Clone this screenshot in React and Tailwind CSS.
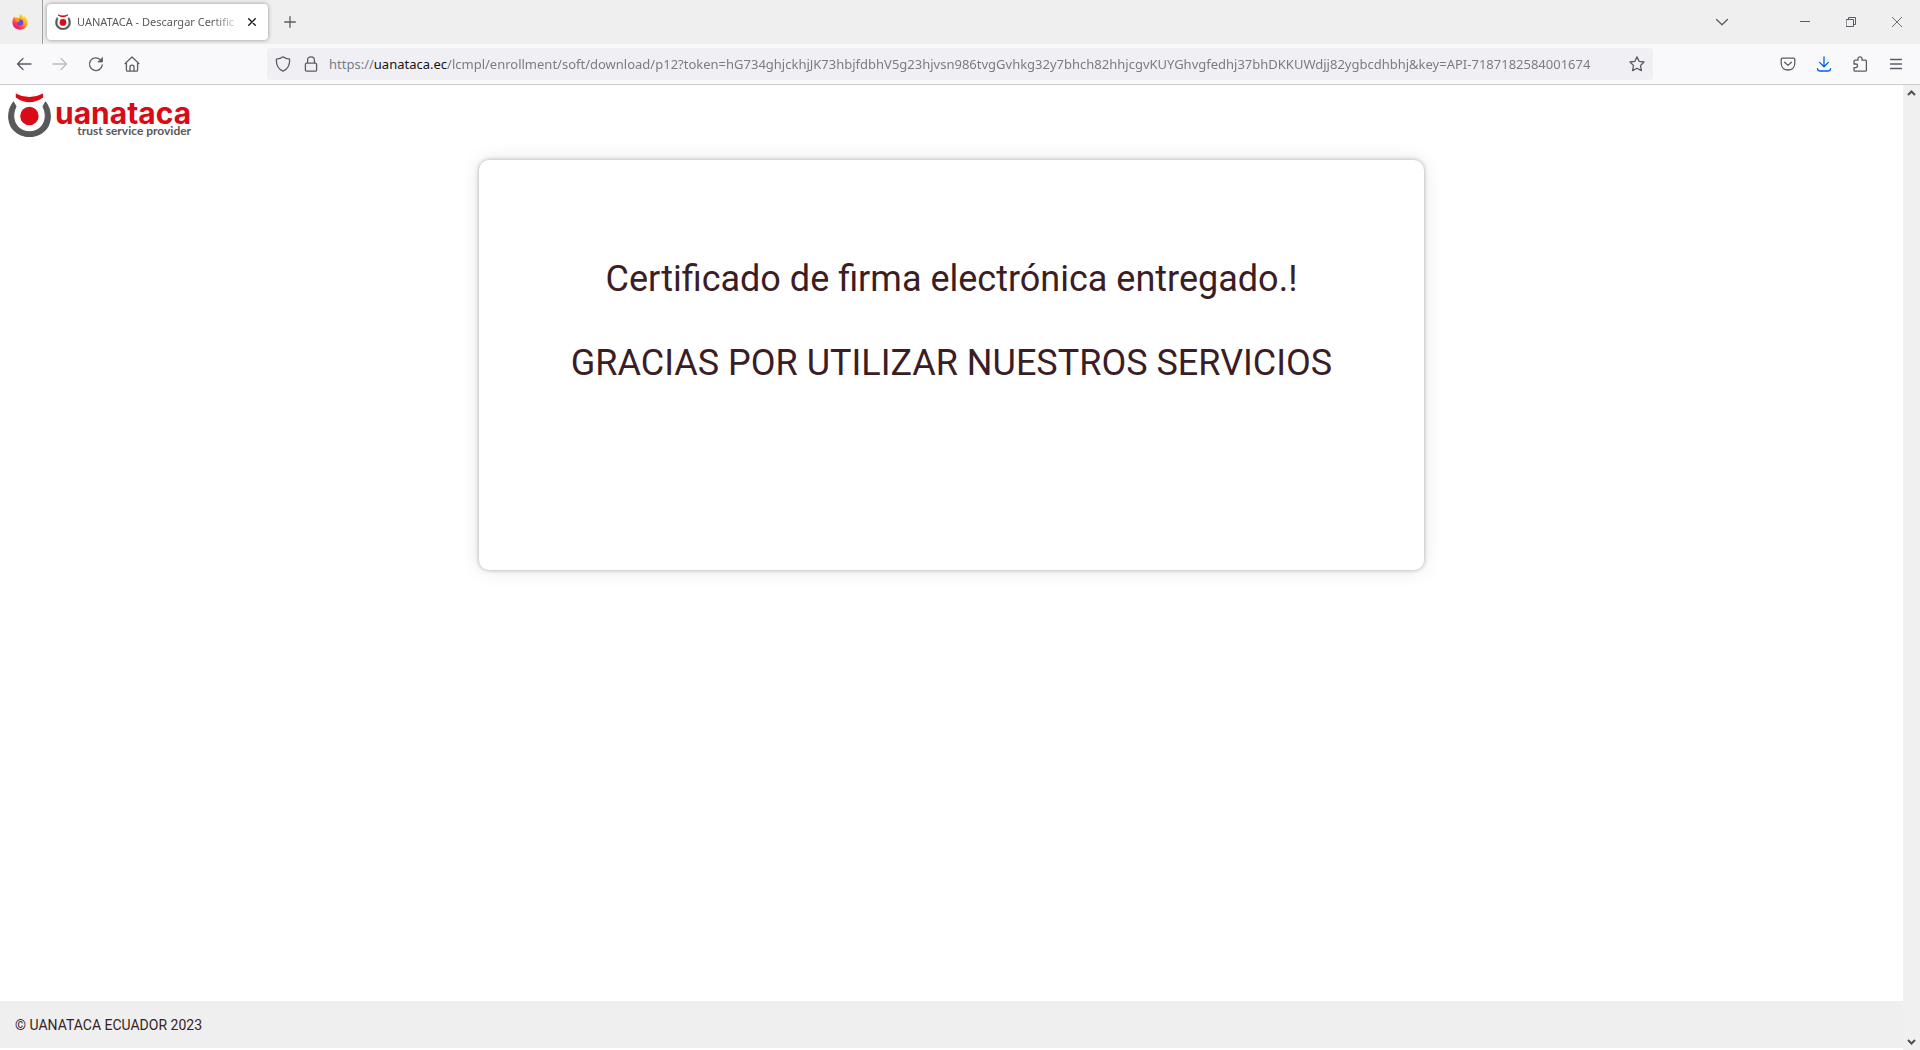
import React, { useState } from 'react';
import { clsx } from 'clsx';

const URL_PATH = '/lcmpl/enrollment/soft/download/p12?token=hG734ghjckhjJK73hbjfdbhV5g23hjvsn986tvgGvhkg32y7bhch82hhjcgvKUYGhvgfedhj37bhDKKUWdjj82ygbcdhbhj&key=API-7187182584001674';

const Icon = ({ children, size = 16, className }) => (
    <svg
        width={size}
        height={size}
        viewBox={`0 0 ${size} ${size}`}
        fill="none"
        stroke="currentColor"
        strokeWidth="1.3"
        strokeLinecap="round"
        strokeLinejoin="round"
        className={clsx('shrink-0', className)}
        aria-hidden="true"
    >
        {children}
    </svg>
);

const ToolButton = ({ label, children, className, disabled }) => (
    <button
        type="button"
        aria-label={label}
        disabled={disabled}
        className={clsx('flex h-8 w-9 shrink-0 items-center justify-center', className)}
    >
        {children}
    </button>
);

const LogoMark = ({ className }) => (
    <svg viewBox="1 0 41 42" className={clsx('shrink-0', className)} fill="none" aria-hidden="true">
        <path
            d="M6.2 8.6 C-0.6 17.5 0.4 30.5 7.6 36.4 C15.4 43.4 27.6 43.4 35.4 36.4 C42.6 30.5 43.6 17.5 36.8 8.6 L34.4 13 C38.2 20 36.8 28.6 32 33 C26.2 38.4 16.8 38.4 11 33 C6.2 28.6 4.8 20 8.6 13 Z"
            fill="#58595b"
            stroke="#58595b"
            strokeWidth="1"
            strokeLinejoin="round"
        />
        <path d="M8.4 0.4 Q21.3 7.4 34.4 0.4 L34.6 4.2 Q28 8.8 21.4 8.8 Q14.6 8.8 8.4 4.2 Z" fill="#d90b17" />
        <circle cx="21.4" cy="22" r="8.8" fill="#d90b17" />
    </svg>
);

const FirefoxIcon = () => (
    <svg width="16" height="16" viewBox="0 0 16 16" aria-hidden="true">
        <defs>
            <linearGradient id="fox" x1="0.8" y1="0.1" x2="0.2" y2="0.9">
                <stop offset="0" stopColor="#ffe226" />
                <stop offset="0.45" stopColor="#ff9a1f" />
                <stop offset="0.75" stopColor="#ff3b47" />
                <stop offset="1" stopColor="#e31587" />
            </linearGradient>
        </defs>
        <path
            d="M8.6 0.3 C10.5 1.4 11.2 2.5 11.4 3.6 L12.6 2.6 C14.6 4.2 15.8 6 15.7 8.6 C15.5 12.8 12.2 15.7 8 15.7 C3.7 15.7 0.4 12.5 0.4 8.3 C0.4 5.7 1.3 3.7 2.6 2.5 L3.2 3.9 C4.4 3.3 6 3.4 7.2 4 C7 2.5 7.5 1.2 8.6 0.3 Z"
            fill="url(#fox)"
        />
        <circle cx="8" cy="8.4" r="3.2" fill="#7543e3" />
        <path d="M3.4 5.2 C5 4.4 7 4.9 8.3 6.4 C6.8 6.6 6.3 7.4 6.8 8.2 C5.4 8.8 4 7.6 3.4 5.2 Z" fill="#ffa02b" />
    </svg>
);

const TabStrip = () => (
    <header className="flex h-11 shrink-0 items-center bg-[#efefef] text-[#5b5b66]">
        <div className="flex h-full w-[43px] items-center justify-center border-r border-[#a0a0a0] pr-0.5">
            <FirefoxIcon />
        </div>
        <div className="ml-1 flex h-9 w-[221px] items-center rounded bg-white px-2 shadow-[0_0_4px_rgba(0,0,0,0.4)]">
            <LogoMark className="h-4 w-4" />
            <span className="ml-1.5 flex-1 overflow-hidden whitespace-nowrap text-[11px] text-[#5a5a5a] [mask-image:linear-gradient(to_left,transparent,black_32px)]">
                UANATACA - Descargar Certific
            </span>
            <button type="button" aria-label="Cerrar" className="flex h-4 w-4 items-center justify-center text-[#15141a]">
                <Icon size={8}>
                    <path d="M0.7 0.7 L7.3 7.3 M7.3 0.7 L0.7 7.3" />
                </Icon>
            </button>
        </div>
        <ToolButton label="Nueva pestaña" className="ml-1">
            <Icon size={12}>
                <path d="M6 0.7 V11.3 M0.7 6 H11.3" />
            </Icon>
        </ToolButton>
        <div className="flex-1" />
        <ToolButton label="Listar pestañas" className="mr-[42px]">
            <Icon size={14}>
                <path d="M1.5 4.5 L7 9.8 L12.5 4.5" />
            </Icon>
        </ToolButton>
        <div className="flex">
            <button type="button" aria-label="Minimizar" className="flex h-11 w-[46px] items-center justify-center">
                <Icon size={10}>
                    <path d="M0 4.5 H10" strokeWidth="1" strokeLinecap="butt" />
                </Icon>
            </button>
            <button type="button" aria-label="Restaurar" className="flex h-11 w-[46px] items-center justify-center">
                <Icon size={10}>
                    <path d="M0.5 2.5 H7.5 V9.5 H0.5 Z M2.5 2.5 V0.5 H9.5 V7.5 H7.5" strokeWidth="1" />
                </Icon>
            </button>
            <button type="button" aria-label="Cerrar ventana" className="flex h-11 w-[46px] items-center justify-center">
                <Icon size={10}>
                    <path d="M0.3 0.3 L9.7 9.7 M9.7 0.3 L0.3 9.7" strokeWidth="0.9" />
                </Icon>
            </button>
        </div>
    </header>
);

const UrlBar = () => {
    const [path, setPath] = useState(URL_PATH);

    return (
        <div className="mx-[117px] flex h-8 min-w-0 flex-1 items-center rounded bg-[#f0f0f4] px-2 text-[13px] text-[#7b7b83]">
            <Icon className="text-[#5b5b66]">
                <path d="M8 0.8 C9.8 2.2 12 2.9 14.6 3.1 C15 8.6 12.8 13 8 15.2 C3.2 13 1 8.6 1.4 3.1 C4 2.9 6.2 2.2 8 0.8 Z" />
            </Icon>
            <Icon className="ml-3 text-[#5b5b66]">
                <path d="M3.6 7.2 H12.4 Q13.6 7.2 13.6 8.4 V14 Q13.6 15.2 12.4 15.2 H3.6 Q2.4 15.2 2.4 14 V8.4 Q2.4 7.2 3.6 7.2 Z M4.6 7.2 V4.2 Q4.6 0.8 8 0.8 Q11.4 0.8 11.4 4.2 V7.2" />
            </Icon>
            <label htmlFor="url" className="ml-2.5 whitespace-nowrap pt-0.5">
                https://<span className="text-[#15141a]">uanataca.ec</span>
            </label>
            <input
                id="url"
                type="text"
                value={path}
                onChange={(e) => setPath(e.target.value)}
                className="min-w-0 flex-1 bg-transparent pt-0.5 outline-none [mask-image:linear-gradient(to_left,transparent,black_32px)]"
            />
            <button type="button" aria-label="Añadir a marcadores" className="ml-2 text-[#5b5b66]">
                <Icon>
                    <path d="M8 0.9 L10.1 5.3 L15 6 L11.5 9.5 L12.4 14.6 L8 12.2 L3.6 14.6 L4.5 9.5 L1 6 L5.9 5.3 Z" />
                </Icon>
            </button>
        </div>
    );
};

const NavBar = () => (
    <nav className="flex h-[41px] shrink-0 items-center border-b border-[#cccccc] bg-[#f9f9fb] px-1.5 text-[#5b5b66]">
        <ToolButton label="Atrás">
            <Icon>
                <path d="M15 8 H1.5 M7 2.5 L1.5 8 L7 13.5" />
            </Icon>
        </ToolButton>
        <ToolButton label="Adelante" disabled className="text-[#bdbdc2]">
            <Icon>
                <path d="M1 8 H14.5 M9 2.5 L14.5 8 L9 13.5" />
            </Icon>
        </ToolButton>
        <ToolButton label="Recargar">
            <Icon>
                <path d="M14.2 9 A6.4 6.4 0 1 1 12.3 3.6" />
                <path d="M14.5 1.8 V6 H10.2 Z" fill="currentColor" strokeWidth="0.8" />
            </Icon>
        </ToolButton>
        <ToolButton label="Inicio">
            <Icon>
                <path d="M1 7.6 L8 1 L15 7.6 M2.4 6.6 V14 Q2.4 15.2 3.6 15.2 H12.4 Q13.6 15.2 13.6 14 V6.6 M6 15 V11 Q6 9.2 8 9.2 Q10 9.2 10 11 V15" />
            </Icon>
        </ToolButton>
        <UrlBar />
        <ToolButton label="Pocket">
            <Icon>
                <path d="M2.6 2.2 H13.4 Q14.8 2.2 14.8 3.6 V7.2 C14.8 11.4 11.8 14 8 14 C4.2 14 1.2 11.4 1.2 7.2 V3.6 Q1.2 2.2 2.6 2.2 Z M4.6 6.2 L8 9.4 L11.4 6.2" />
            </Icon>
        </ToolButton>
        <ToolButton label="Descargas" className="text-[#0061e0]">
            <Icon>
                <path d="M8 0.8 V10.6 M3.6 6.4 L8 10.8 L12.4 6.4 M1.5 12.6 Q1.5 15 3.6 15 H12.4 Q14.5 15 14.5 12.6" />
            </Icon>
        </ToolButton>
        <ToolButton label="Extensiones">
            <Icon>
                <path d="M2 8 V5.2 Q2 4.2 3 4.2 H6 V2.8 A2 2 0 0 1 10 2.8 V4.2 H13.4 Q14.4 4.2 14.4 5.2 V14.2 Q14.4 15.2 13.4 15.2 H3 Q2 15.2 2 14.2 V11.6 H3.8 A1.8 1.8 0 0 0 3.8 8 H2 Z" />
            </Icon>
        </ToolButton>
        <ToolButton label="Menú">
            <Icon size={12}>
                <path d="M0.5 1.5 H11.5 M0.5 6 H11.5 M0.5 10.5 H11.5" />
            </Icon>
        </ToolButton>
    </nav>
);

const Logo = () => (
    <a href="#" className="flex w-max items-start pl-2 pt-2" aria-label="uanataca">
        <LogoMark className="h-11 w-[43px]" />
        <span className="ml-1 flex flex-col items-end">
            <span className="font-['Inter'] text-[30px] font-bold leading-10 text-[#d90b17]">uanataca</span>
            <span className="-mt-2 font-['Lato'] text-xs font-bold leading-3 text-[#58595b]">trust service provider</span>
        </span>
    </a>
);

const Scrollbar = () => (
    <div className="flex w-[17px] shrink-0 flex-col items-center justify-between bg-[#f0f0f0] py-1 text-[#505050]">
        <Icon size={9}>
            <path d="M1 6 L4.5 2.5 L8 6" strokeWidth="2" strokeLinecap="butt" strokeLinejoin="miter" />
        </Icon>
        <Icon size={9}>
            <path d="M1 3 L4.5 6.5 L8 3" strokeWidth="2" strokeLinecap="butt" strokeLinejoin="miter" />
        </Icon>
    </div>
);

export default function App() {
    return (
        <div className="flex h-screen flex-col bg-white font-['Noto_Sans',sans-serif]">
            <TabStrip />
            <NavBar />
            <div className="flex min-h-0 flex-1">
                <div className="flex min-w-0 flex-1 flex-col pb-0.5 font-['Roboto',sans-serif] text-[#3a1d25]">
                    <Logo />
                    <main className="flex-1 px-4 pt-[23px]">
                        <section className="mx-auto min-h-[410px] max-w-[945px] rounded-[10px] bg-white px-4 pt-[98px] text-center text-[36px] leading-[42px] shadow-[0_0_4px_rgba(0,0,0,0.3),0_0_20px_rgba(0,0,0,0.1)]">
                            <h1>Certificado de firma electrónica entregado.!</h1>
                            <p className="mt-[42px]">GRACIAS POR UTILIZAR NUESTROS SERVICIOS</p>
                        </section>
                    </main>
                    <footer className="flex h-[47px] items-center bg-[#efefef] px-[15px] text-sm">
                        © UANATACA ECUADOR 2023
                    </footer>
                </div>
                <Scrollbar />
            </div>
        </div>
    );
}
